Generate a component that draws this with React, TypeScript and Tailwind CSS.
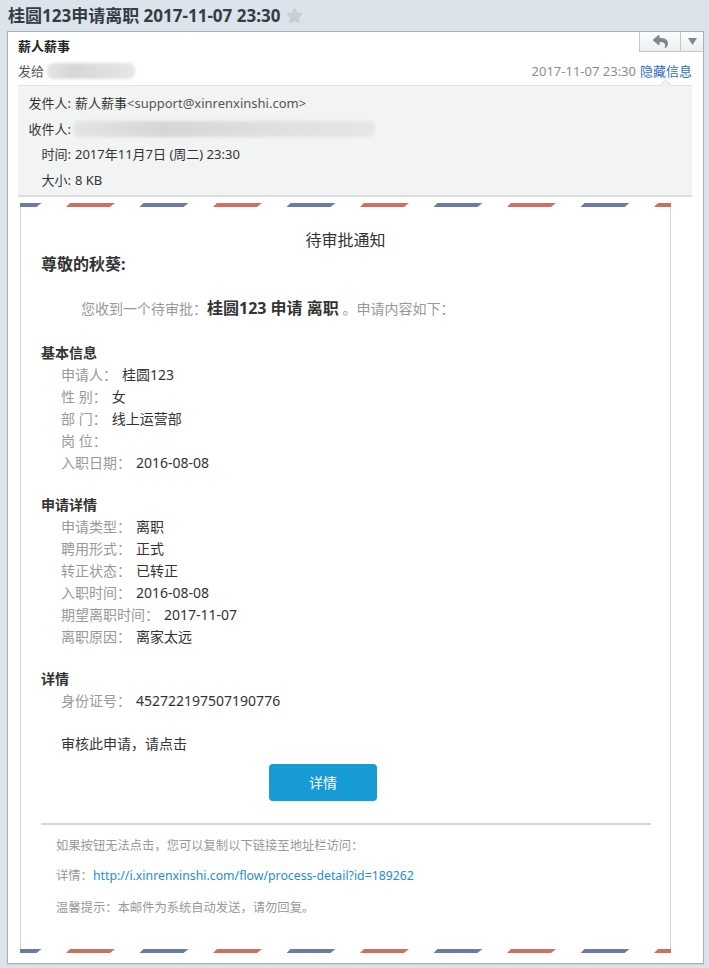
import React from "react";
import { FaReply, FaStar } from "react-icons/fa";

const basicInfo: [string, string][] = [
  ["申请人：", "桂圆123"],
  ["性 别：", "女"],
  ["部 门：", "线上运营部"],
  ["岗 位：", ""],
  ["入职日期：", "2016-08-08"],
];

const applyInfo: [string, string][] = [
  ["申请类型：", "离职"],
  ["聘用形式：", "正式"],
  ["转正状态：", "已转正"],
  ["入职时间：", "2016-08-08"],
  ["期望离职时间：", "2017-11-07"],
  ["离职原因：", "离家太远"],
];

function Airmail() {
  // blue/red parallelograms, 73.5px apart
  const items = [];
  for (let i = 0; i < 10; i++) {
    const x = -27.5 + i * 73.5;
    const color = i % 2 === 0 ? "#6a7ca5" : "#cf6f60";
    items.push(
      <polygon
        key={i}
        points={`${x},4 ${x + 4},0 ${x + 49},0 ${x + 44},4`}
        fill={color}
      />
    );
  }
  return (
    <svg width="651" height="4" className="block">
      {items}
    </svg>
  );
}

function Rows({ rows }: { rows: [string, string][] }) {
  return (
    <div className="pl-[20px]">
      {rows.map(([k, v]) => (
        <div key={k} className="leading-[22px] text-[14px]">
          <span className="text-[#999]">{k}</span>
          <span className="ml-[5px] text-[#333]">{v}</span>
        </div>
      ))}
    </div>
  );
}

function Blur({ w }: { w: number }) {
  return (
    <span
      className="inline-block h-[16px] rounded-[6px] bg-[linear-gradient(90deg,#e4e4e4,#d6d6d6_30%,#dedede_60%,#e6e6e6)] blur-[1.5px] align-middle"
      style={{ width: w }}
    />
  );
}

export default function App() {
  return (
    <div className="min-h-[968px] bg-[#dde3ea] font-['Noto_Sans','Noto_Sans_CJK_SC',sans-serif] text-[#333]">
      <div className="flex h-[31px] items-center pl-[8px]">
        <span className="text-[17px] font-bold leading-none text-[#333c47]">
          桂圆123申请离职 2017-11-07 23:30
        </span>
        <FaStar className="ml-[6px] text-[#c8ced5]" size={17} />
      </div>

      <div className="ml-[7px] mr-[5px] border border-[#aab1b8] bg-white pb-[10px] shadow-[0_1px_1px_rgba(0,0,0,0.08)]">
        <div className="flex justify-between">
          <div className="pl-[10px]">
            <div className="pt-[4px] text-[13px] font-bold leading-[20px] text-[#222]">
              薪人薪事
            </div>
            <div className="mt-[5px] flex items-center gap-[3px] text-[13px] leading-[20px] text-[#555]">
              发给
              <Blur w={88} />
            </div>
          </div>
          <div className="flex flex-col items-end">
            <div className="flex h-[20px] border-b border-l border-[#c3c8cd] bg-[linear-gradient(#fdfdfd,#eceef0)]">
              <div className="flex w-[41px] items-center justify-center border-r border-[#c3c8cd]">
                <FaReply className="text-[#7d8792]" size={15} />
              </div>
              <div className="flex w-[22px] items-center justify-center">
                <svg width="9" height="7" viewBox="0 0 9 7">
                  <polygon points="0,0 9,0 4.5,7" fill="#7d8792" />
                </svg>
              </div>
            </div>
            <div className="mr-[11px] mt-[9px] text-[13px] leading-[20px]">
              <span className="text-[#8c8c8c]">2017-11-07 23:30</span>
              <span className="ml-[4px] text-[#2f6fc6]">隐藏信息</span>
            </div>
          </div>
        </div>

        <div className="relative ml-[10px] mr-[11px] mt-[4px] border-t border-b-2 border-t-[#dfe3e3] border-b-[#dadede] bg-[#f1f4f3] pb-[2px] pt-[5px] text-[13px] leading-[25.5px] text-[#333]">
          <div className="absolute -top-[5px] right-[22px] h-[9px] w-[9px] rotate-45 border-l border-t border-[#dfe3e3] bg-[#f1f4f3]" />
          <div className="flex">
            <span className="w-[53px] text-right">发件人:</span>
            <span className="ml-[4px]">
              薪人薪事<span className="text-[#555]">&lt;support@xinrenxinshi.com&gt;</span>
            </span>
          </div>
          <div className="flex items-center">
            <span className="w-[53px] text-right">收件人:</span>
            <span className="ml-[2px] flex items-center">
              <Blur w={302} />
            </span>
          </div>
          <div className="flex">
            <span className="w-[53px] text-right">时间:</span>
            <span className="ml-[4px]">2017年11月7日 (周二) 23:30</span>
          </div>
          <div className="flex">
            <span className="w-[53px] text-right">大小:</span>
            <span className="ml-[4px]">8 KB</span>
          </div>
        </div>

        <div className="ml-[12px] mt-[6px] w-[651px]">
          <Airmail />
          <div className="border-x border-[#d4d4d4] px-[20px] pb-[31px] pt-[21px]">
            <div className="text-center text-[16px] leading-[24px] text-[#333]">
              待审批通知
            </div>
            <div className="text-[16px] font-bold leading-[24px] text-[#333]">
              尊敬的秋葵:
            </div>
            <div className="mt-[20px] pl-[40px] leading-[24px]">
              <span className="text-[14px] text-[#999]">您收到一个待审批：</span>
              <span className="text-[16px] font-bold text-[#333]">桂圆123 申请 离职</span>
              <span className="text-[14px] text-[#999]"> 。申请内容如下：</span>
            </div>

            <div className="mt-[21px] text-[14px] font-bold leading-[22px]">基本信息</div>
            <Rows rows={basicInfo} />

            <div className="mt-[20px] text-[14px] font-bold leading-[22px]">申请详情</div>
            <Rows rows={applyInfo} />

            <div className="mt-[20px] text-[14px] font-bold leading-[22px]">详情</div>
            <Rows rows={[["身份证号：", "452722197507190776"]]} />

            <div className="mt-[21px] pl-[20px] text-[14px] leading-[22px] text-[#333]">
              审核此申请，请点击
            </div>
            <div className="mt-[9px] pl-[228px]">
              <div className="flex h-[37px] w-[108px] items-center justify-center rounded-[4px] bg-[#189cd5] text-[14px] text-white">
                详情
              </div>
            </div>

            <div className="mr-[-1px] mt-[22px] h-[2px] bg-[#d6d6d6]" />

            <div className="pl-[15px] text-[12.3px] leading-[20px] text-[#999]">
              <div className="mt-[11px]">如果按钮无法点击，您可以复制以下链接至地址栏访问：</div>
              <div className="mt-[10px]">
                详情：
                <span className="text-[#1e8cd6]">
                  http://i.xinrenxinshi.com/flow/process-detail?id=189262
                </span>
              </div>
              <div className="mt-[12px]">温馨提示：本邮件为系统自动发送，请勿回复。</div>
            </div>
          </div>
          <Airmail />
        </div>
      </div>
    </div>
  );
}
